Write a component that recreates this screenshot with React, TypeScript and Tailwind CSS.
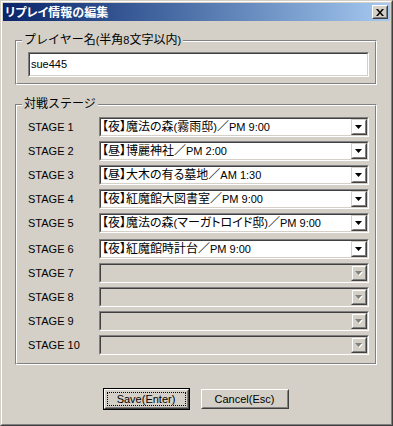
import React from "react"

const stages = [
  "【夜】魔法の森(霧雨邸)／PM 9:00",
  "【昼】博麗神社／PM 2:00",
  "【昼】大木の有る墓地／AM 1:30",
  "【夜】紅魔館大図書室／PM 9:00",
  "【夜】魔法の森(マーガトロイド邸)／PM 9:00",
  "【夜】紅魔館時計台／PM 9:00",
  "",
  "",
  "",
  "",
]

// CJK runs get 12px, latin stays at 11px (closer to MS UI Gothic widths)
function T({ s, prop }: { s: string; prop?: boolean }) {
  const parts = s.split(/([\u3000-\u30ff\u4e00-\u9fff\uff01-\uffef]+)/)
  const cls = prop ? "text-[12px] [font-feature-settings:'palt']" : "text-[12px] [font-feature-settings:'halt']"
  return (
    <>
      {parts.map((p, i) =>
        i % 2 ? (
          <span key={i} className={cls}>
            {p}
          </span>
        ) : (
          p
        ),
      )}
    </>
  )
}

function Group({ label, children }: { label: string; children: React.ReactNode }) {
  return (
    <div className="relative border border-t-[#808080] border-l-[#808080] border-b-white border-r-white">
      <div className="border border-t-white border-l-white border-b-[#808080] border-r-[#808080]">
        {children}
      </div>
      <div className="absolute top-[-8px] left-[6px] px-[2px] bg-[#d4d0c8] leading-[14px] text-black">
        <T s={label} />
      </div>
    </div>
  )
}

function Arrow({ disabled }: { disabled?: boolean }) {
  return (
    <div className="w-[16px] h-[16px] border border-t-[#d4d0c8] border-l-[#d4d0c8] border-b-[#404040] border-r-[#404040]">
      <div className="w-full h-full border border-t-white border-l-white border-b-[#808080] border-r-[#808080] flex items-center justify-center">
        <svg width="8" height="5" viewBox="0 0 8 5">
          {disabled && <path d="M1 1h7L4.5 5z" fill="#ffffff" />}
          <path d="M0 0h7L3.5 4z" fill={disabled ? "#808080" : "#000000"} />
        </svg>
      </div>
    </div>
  )
}

function Combo({ value, disabled }: { value: string; disabled?: boolean }) {
  return (
    <div className="flex-1 h-[20px] border border-t-[#808080] border-l-[#808080] border-b-white border-r-white">
      <div
        className={
          "h-full flex items-center border border-t-[#404040] border-l-[#404040] border-b-[#d4d0c8] border-r-[#d4d0c8] " +
          (disabled ? "bg-[#d4d0c8]" : "bg-white")
        }
      >
        <div className="flex-1 pl-[1px] leading-[16px] whitespace-nowrap overflow-hidden text-black">
          <T s={value} prop />
        </div>
        <Arrow disabled={disabled} />
      </div>
    </div>
  )
}

export default function App() {
  return (
    <div className="w-[393px] h-[426px] bg-[#d4d0c8] font-['Liberation_Sans','Noto_Sans_CJK_JP',sans-serif] text-[11px] border border-t-[#d4d0c8] border-l-[#d4d0c8] border-b-[#404040] border-r-[#404040]">
      <div className="h-full flex flex-col p-[1px] border border-t-white border-l-white border-b-[#808080] border-r-[#808080]">
        {/* title bar */}
        <div className="h-[18px] flex items-center justify-between pl-[2px] pr-[2px] bg-linear-to-r from-[#0a246a] to-[#a6caf0]">
          <span className="text-white font-bold text-[12px] leading-[14px] font-['Noto_Sans_CJK_JP',sans-serif] [font-feature-settings:'palt']">
            リプレイ情報の編集
          </span>
          <div className="w-[16px] h-[14px] border border-t-white border-l-white border-b-[#404040] border-r-[#404040] bg-[#d4d0c8]">
            <div className="w-full h-full border border-t-[#d4d0c8] border-l-[#d4d0c8] border-b-[#808080] border-r-[#808080] flex items-center justify-center">
              <svg width="8" height="7" viewBox="0 0 8 7">
                <path d="M0 0h2l2 2.5L6 0h2L5 3.5 8 7H6L4 4.5 2 7H0l3-3.5z" fill="#000" />
              </svg>
            </div>
          </div>
        </div>

        <div className="flex-1 flex flex-col pl-[12px] pr-[13px] pt-[19px]">
          <Group label="プレイヤー名(半角8文字以内)">
            <div className="pl-[11px] pr-[6px] pt-[10px] pb-[6px]">
              <div className="h-[25px] border border-t-[#808080] border-l-[#808080] border-b-white border-r-white">
                <div className="h-full bg-white flex items-center pl-[1px] border border-t-[#404040] border-l-[#404040] border-b-[#d4d0c8] border-r-[#d4d0c8] text-black">
                  sue445
                </div>
              </div>
            </div>
          </Group>

          <div className="mt-[19px]">
            <Group label="対戦ステージ">
              <div className="pl-[11px] pr-[6px] pt-[11px] pb-[8px] flex flex-col gap-[4px]">
                {stages.map((s, i) => (
                  <div key={i} className={"flex items-center " + (i === 5 ? "mt-[2px]" : "")}>
                    <div className="w-[71px] text-black">STAGE {i + 1}</div>
                    <Combo value={s} disabled={i >= 6} />
                  </div>
                ))}
              </div>
            </Group>
          </div>

          <div className="mt-[23px] flex justify-center items-center gap-[11px] pr-[1px]">
            <div className="w-[87px] h-[22px] border border-black">
              <div className="w-full h-full border border-t-white border-l-white border-b-[#404040] border-r-[#404040]">
                <div className="w-full h-full p-[1px] border border-t-[#d4d0c8] border-l-[#d4d0c8] border-b-[#808080] border-r-[#808080]">
                  <div className="w-full h-full border border-dotted border-black flex items-center justify-center text-black">
                    Save(Enter)
                  </div>
                </div>
              </div>
            </div>
            <div className="w-[88px] h-[20px] border border-t-white border-l-white border-b-[#404040] border-r-[#404040]">
              <div className="w-full h-full border border-t-[#d4d0c8] border-l-[#d4d0c8] border-b-[#808080] border-r-[#808080] flex items-center justify-center text-black">
                Cancel(Esc)
              </div>
            </div>
          </div>
        </div>
      </div>
    </div>
  )
}
